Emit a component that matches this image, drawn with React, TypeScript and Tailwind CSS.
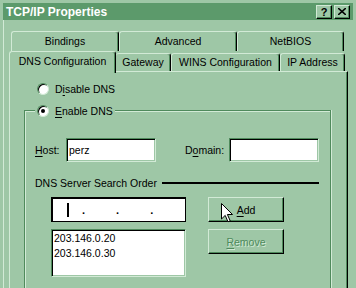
import type { ReactNode } from "react";

function Radio({ checked }: { checked?: boolean }) {
  return (
    <span className="flex h-[12px] w-[12px] shrink-0 items-center justify-center rounded-full border border-t-[#4f8a5c] border-l-[#4f8a5c] border-b-[#d2ead6] border-r-[#d2ead6] bg-white shadow-[inset_1px_1px_0_#000]">
      {checked && <span className="h-[4px] w-[4px] rounded-full bg-black" />}
    </span>
  );
}

function U({ children }: { children: ReactNode }) {
  return <span className="underline underline-offset-[2px]">{children}</span>;
}

function TitleButton({ children }: { children: ReactNode }) {
  return (
    <div className="flex h-[14px] w-[16px] items-center justify-center border border-t-[#d2ead6] border-l-[#d2ead6] border-b-black border-r-black bg-[#9ec7a6] shadow-[inset_-1px_-1px_0_#4f8a5c]">
      {children}
    </div>
  );
}

export default function App() {
  return (
    <div className="relative h-[288px] w-[356px] overflow-hidden bg-[#9ec7a6] font-['Liberation_Sans',Arial,sans-serif] text-[10.5px] leading-[12px] text-black">
      <div className="px-[3px] pt-[3px]">
        {/* Title bar */}
        <div className="flex h-[17px] items-center justify-between bg-[#5c9a6b] pl-[3px] pr-[3px]">
          <span className="text-[12px] font-bold leading-[14px] text-white">TCP/IP Properties</span>
          <div className="flex gap-[2px]">
            <TitleButton>
              <span className="text-[11px] font-bold leading-[12px]">?</span>
            </TitleButton>
            <TitleButton>
              <svg width="8" height="7" viewBox="0 0 8 7">
                <path d="M0 0 L8 7 M8 0 L0 7" stroke="#000" strokeWidth="1.6" />
              </svg>
            </TitleButton>
          </div>
        </div>

        {/* Body */}
        <div className="h-[280px] border-l border-l-[#d2ead6] pl-[5px] pt-[11px]">
          {/* Back row of tabs */}
          <div className="ml-[2px] flex h-[20px]">
            <div className="flex h-[20px] w-[108px] justify-center rounded-t-[3px] border-t border-l border-r border-t-[#d2ead6] border-l-[#d2ead6] border-r-black pt-[3px] shadow-[inset_-1px_0_0_#4f8a5c]">
              Bindings
            </div>
            <div className="flex h-[20px] w-[118px] justify-center rounded-t-[3px] border-t border-l border-r border-t-[#d2ead6] border-l-[#d2ead6] border-r-black pt-[3px] shadow-[inset_-1px_0_0_#4f8a5c]">
              Advanced
            </div>
            <div className="flex h-[20px] w-[107px] justify-center rounded-t-[3px] border-t border-l border-r border-t-[#d2ead6] border-l-[#d2ead6] border-r-black pt-[3px] shadow-[inset_-1px_0_0_#4f8a5c]">
              NetBIOS
            </div>
          </div>

          {/* Front row of tabs */}
          <div className="relative z-10 flex h-[20px] items-end">
            <div className="-mb-[2px] flex h-[22px] w-[107px] justify-center rounded-t-[3px] border-t border-l border-r border-t-[#d2ead6] border-l-[#d2ead6] border-r-black bg-[#9ec7a6] pt-[3px] shadow-[inset_-1px_0_0_#4f8a5c]">
              DNS Configuration
            </div>
            <div className="flex h-[18px] w-[55px] justify-center rounded-t-[3px] border-t border-r border-t-[#d2ead6] border-r-black pt-[2px] shadow-[inset_-1px_0_0_#4f8a5c]">
              Gateway
            </div>
            <div className="flex h-[18px] w-[109px] justify-center rounded-t-[3px] border-t border-l border-r border-t-[#d2ead6] border-l-[#d2ead6] border-r-black pt-[2px] shadow-[inset_-1px_0_0_#4f8a5c]">
              WINS Configuration
            </div>
            <div className="flex h-[18px] w-[65px] justify-center rounded-t-[3px] border-t border-l border-r border-t-[#d2ead6] border-l-[#d2ead6] border-r-black pt-[2px] shadow-[inset_-1px_0_0_#4f8a5c]">
              IP Address
            </div>
          </div>

          {/* Tab panel */}
          <div className="h-[230px] w-[339px] border-t border-l border-r border-t-[#d2ead6] border-l-[#d2ead6] border-r-black shadow-[inset_-1px_0_0_#4f8a5c]">
            <div className="ml-[27px] mt-[11px] flex items-center gap-[6px]">
              <Radio />
              <span>
                D<U>i</U>sable DNS
              </span>
            </div>

            {/* Group box */}
            <div className="ml-[14px] mt-[15px] h-[200px] w-[307px] border-t border-l border-r border-[#4f8a5c] shadow-[inset_1px_1px_0_#d2ead6,1px_0_0_#d2ead6]">
              <div className="-mt-[6px] ml-[10px] flex w-fit items-center gap-[6px] bg-[#9ec7a6] px-[2px]">
                <Radio checked />
                <span>
                  <U>E</U>nable DNS
                </span>
              </div>

              {/* Host / Domain */}
              <div className="ml-[10px] mt-[21px] flex items-center">
                <span className="w-[31px]">
                  <U>H</U>ost:
                </span>
                <div className="flex h-[24px] w-[90px] items-center border border-t-[#4f8a5c] border-l-[#4f8a5c] border-b-[#d2ead6] border-r-[#d2ead6] bg-white pl-[2px] shadow-[inset_1px_1px_0_#000,inset_-1px_-1px_0_#9ec7a6]">
                  perz
                </div>
                <span className="ml-[29px] w-[44px]">
                  D<U>o</U>main:
                </span>
                <div className="h-[24px] w-[90px] border border-t-[#4f8a5c] border-l-[#4f8a5c] border-b-[#d2ead6] border-r-[#d2ead6] bg-white shadow-[inset_1px_1px_0_#000,inset_-1px_-1px_0_#9ec7a6]" />
              </div>

              {/* Separator */}
              <div className="ml-[10px] mt-[15px] flex w-[284px] items-center gap-[5px]">
                <span>DNS Server Search Order</span>
                <div className="h-[2px] flex-1 bg-black" />
              </div>

              {/* Server list */}
              <div className="ml-[26px] mt-[8px] flex gap-[22px]">
                <div className="flex flex-col gap-[7px]">
                  <div className="flex h-[25px] w-[135px] items-center border border-black bg-white pl-[15px] shadow-[inset_1px_1px_0_#000]">
                    <span className="h-[14px] w-[2px] bg-black" />
                    <span className="ml-[13px] text-[11px] font-bold">.</span>
                    <span className="ml-[31px] text-[11px] font-bold">.</span>
                    <span className="ml-[31px] text-[11px] font-bold">.</span>
                  </div>
                  <div className="h-[48px] w-[135px] border border-t-[#4f8a5c] border-l-[#4f8a5c] border-b-[#d2ead6] border-r-[#d2ead6] bg-white pl-[2px] pt-[1px] leading-[15px] shadow-[inset_1px_1px_0_#000,inset_-1px_-1px_0_#9ec7a6]">
                    <div>203.146.0.20</div>
                    <div>203.146.0.30</div>
                  </div>
                </div>
                <div className="flex flex-col gap-[7px]">
                  <div className="flex h-[25px] w-[76px] items-center justify-center border border-t-[#d2ead6] border-l-[#d2ead6] border-b-black border-r-black shadow-[inset_-1px_-1px_0_#4f8a5c]">
                    <span>
                      <U>A</U>dd
                    </span>
                  </div>
                  <div className="flex h-[25px] w-[76px] items-center justify-center border border-t-[#d2ead6] border-l-[#d2ead6] border-b-black border-r-black text-[#4f8a5c] shadow-[inset_-1px_-1px_0_#4f8a5c] [text-shadow:1px_1px_0_#d2ead6]">
                    <span>
                      <U>R</U>emove
                    </span>
                  </div>
                </div>
              </div>
            </div>
          </div>
        </div>
      </div>

      {/* Mouse pointer */}
      <svg className="absolute left-[221px] top-[203px]" width="12" height="20" viewBox="0 0 12 20">
        <path d="M0.5 0.5 V16 L4.2 12.4 L7 18.8 L9.2 17.8 L6.4 11.5 H11.5 Z" fill="#fff" stroke="#000" strokeWidth="1" />
      </svg>
    </div>
  );
}
